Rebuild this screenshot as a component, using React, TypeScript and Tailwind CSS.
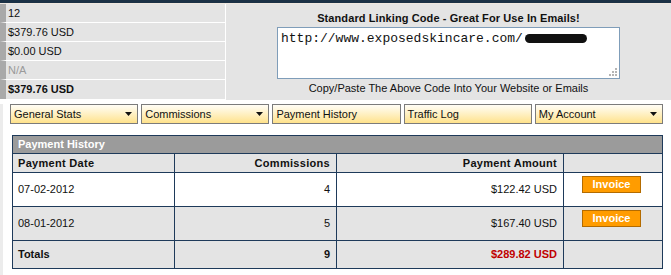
import React from "react";

const NAV = [
  { label: "General Stats", drop: true },
  { label: "Commissions", drop: true },
  { label: "Payment History", drop: false },
  { label: "Traffic Log", drop: false },
  { label: "My Account", drop: true },
];

const STATS = [
  { value: "12" },
  { value: "$379.76 USD" },
  { value: "$0.00 USD" },
  { value: "N/A", muted: true },
  { value: "$379.76 USD", bold: true },
];

const PAYMENTS = [
  { date: "07-02-2012", count: "4", amount: "$122.42 USD" },
  { date: "08-01-2012", count: "5", amount: "$167.40 USD" },
];

export default function App() {
  return (
    <div className="min-h-[275px] w-[671px] bg-white font-['Liberation_Sans',Arial,sans-serif] text-[11px] text-[#111]">
      {/* top rule */}
      <div className="h-[3px] bg-[#1b3146]" />
      <div className="h-px bg-[#efe7df]" />

      {/* stats + linking code */}
      <div className="flex h-[96px]">
        <div className="w-[226px] border-r border-white">
          {STATS.map((s, i) => (
            <div
              key={i}
              className={`flex h-[19px] items-center border-b border-l-[6px] border-b-white border-l-[#a9a9a9] bg-[#e4e4e4] pl-[2px] ${
                i === STATS.length - 1 ? "border-b-0" : ""
              } ${s.muted ? "text-[#9a9a9a]" : ""} ${s.bold ? "font-bold" : ""}`}
            >
              {s.value}
            </div>
          ))}
        </div>
        <div className="flex flex-1 flex-col items-center bg-[#e4e4e4] pt-[8px]">
          <div className="font-bold leading-[13px] tracking-[0.1px]">
            Standard Linking Code - Great For Use In Emails!
          </div>
          <div className="relative mt-[2px] h-[52px] w-[343px] border border-[#7f9db9] bg-white px-[3px] pt-[3px] font-['Liberation_Mono','Courier_New',monospace] text-[13px] leading-[15px]">
            http://www.exposedskincare.com/
            <span className="ml-[2px] inline-block h-[9px] w-[62px] rounded-full bg-[#111] align-[-1px] blur-[0.6px]" />
            <svg
              className="absolute bottom-[2px] right-[2px]"
              width="9"
              height="9"
              viewBox="0 0 9 9"
            >
              <g fill="#b5b5b5">
                <rect x="7" y="1" width="2" height="2" />
                <rect x="4" y="4" width="2" height="2" />
                <rect x="7" y="4" width="2" height="2" />
                <rect x="1" y="7" width="2" height="2" />
                <rect x="4" y="7" width="2" height="2" />
                <rect x="7" y="7" width="2" height="2" />
              </g>
            </svg>
          </div>
          <div className="mt-[3px] leading-[13px]">
            Copy/Paste The Above Code Into Your Website or Emails
          </div>
        </div>
      </div>

      <div className="border-l-[3px] border-[#ececec] pb-[7px]">
        {/* nav dropdowns */}
        <div className="ml-[7px] mt-[4px] flex w-[653px] gap-[3px]">
          {NAV.map((n) => (
            <div
              key={n.label}
              className="flex h-[20px] flex-1 items-center justify-between border border-[#7b7b7b] bg-linear-to-b from-[#fffdf6] to-[#ffe28a] pl-[3px] pr-[5px]"
            >
              <span>{n.label}</span>
              {n.drop && (
                <svg width="7" height="4" viewBox="0 0 7 4">
                  <path d="M0 0h7L3.5 4z" fill="#111" />
                </svg>
              )}
            </div>
          ))}
        </div>

        {/* payment history table */}
        <div className="ml-[9px] mt-[11px] w-[651px] border border-[#1e3a5a]">
          <div className="flex h-[18px] items-center border-b border-[#1e3a5a] bg-[#9b9b9b] pl-[5px] font-bold text-white">
            Payment History
          </div>
          <Row className="h-[19px] bg-[#e4e4e4] font-bold tracking-[0.3px]">
            <Cell>Payment Date</Cell>
            <Cell right>Commissions</Cell>
            <Cell right wide>
              Payment Amount
            </Cell>
            <Cell last />
          </Row>
          {PAYMENTS.map((p, i) => (
            <Row
              key={p.date}
              className={`h-[34px] ${i % 2 === 0 ? "bg-white" : "bg-[#e4e4e4]"}`}
            >
              <Cell>{p.date}</Cell>
              <Cell right>{p.count}</Cell>
              <Cell right wide>
                {p.amount}
              </Cell>
              <Cell last>
                <div className="ml-[18px] mt-[3px] flex h-[17px] w-[59px] items-center justify-center border border-[#b36b00] bg-[#ff9c00] font-bold text-white">
                  Invoice
                </div>
              </Cell>
            </Row>
          ))}
          <Row className="h-[27px] border-b-0 bg-[#e4e4e4] font-bold">
            <Cell>Totals</Cell>
            <Cell right>9</Cell>
            <Cell right wide>
              <span className="text-[#c00000]">$289.82 USD</span>
            </Cell>
            <Cell last />
          </Row>
        </div>
      </div>
    </div>
  );
}

function Row({
  className,
  children,
}: {
  className?: string;
  children: React.ReactNode;
}) {
  return (
    <div className={`flex border-b border-[#1e3a5a] ${className ?? ""}`}>
      {children}
    </div>
  );
}

function Cell({
  right,
  wide,
  last,
  children,
}: {
  right?: boolean;
  wide?: boolean;
  last?: boolean;
  children?: React.ReactNode;
}) {
  if (last) {
    return <div className="flex flex-1 items-start">{children}</div>;
  }
  return (
    <div
      className={`flex items-center border-r border-[#1e3a5a] ${
        wide ? "w-[227px]" : "w-[162px]"
      } ${right ? "justify-end pr-[6px]" : "pl-[5px]"}`}
    >
      {children}
    </div>
  );
}
